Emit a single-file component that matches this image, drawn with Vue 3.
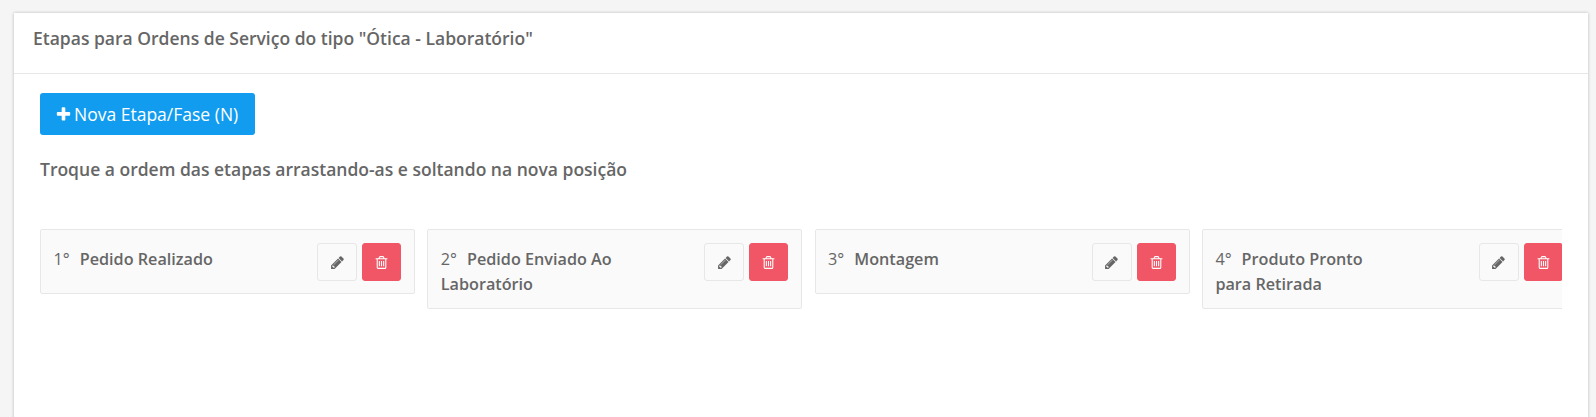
<script setup>
const etapas = [
  { n: '1°', name: 'Pedido Realizado' },
  { n: '2°', name: 'Pedido Enviado Ao Laboratório' },
  { n: '3°', name: 'Montagem' },
  { n: '4°', name: 'Produto Pronto para Retirada' }
]
</script>

<template>
  <div class="page">
    <section class="card">
      <header class="card-head">Etapas para Ordens de Serviço do tipo "Ótica - Laboratório"</header>
      <div class="card-body">
        <button class="btn-new">
          <svg class="plus" viewBox="0 0 1792 1792"><path fill="currentColor" d="M1600 736v192q0 40-28 68t-68 28h-416v416q0 40-28 68t-68 28h-192q-40 0-68-28t-28-68v-416h-416q-40 0-68-28t-28-68v-192q0-40 28-68t68-28h416v-416q0-40 28-68t68-28h192q40 0 68 28t28 68v416h416q40 0 68 28t28 68z"/></svg>
          <span>Nova Etapa/Fase (N)</span>
        </button>
        <h2 class="hint">Troque a ordem das etapas arrastando-as e soltando na nova posição</h2>
        <div class="list">
          <article v-for="e in etapas" :key="e.n" class="item">
            <div class="label"><span class="num">{{ e.n }}</span><span class="name">{{ e.name }}</span></div>
            <div class="actions">
              <button class="btn-edit" aria-label="Editar">
                <svg viewBox="0 0 1792 1792"><path fill="currentColor" d="M491 1536l91-91-235-235-91 91v107h128v128h107zm523-928q0-22-22-22-10 0-17 7l-542 542q-7 7-7 17 0 22 22 22 10 0 17-7l542-542q7-7 7-17zm-54-192l416 416-832 832h-416v-416zm683 96q0 53-37 90l-166 166-416-416 166-165q36-38 90-38 53 0 91 38l235 234q37 39 37 91z"/></svg>
              </button>
              <button class="btn-del" aria-label="Excluir">
                <svg viewBox="0 0 1792 1792"><path fill="currentColor" d="M704 736v576q0 14-9 23t-23 9h-64q-14 0-23-9t-9-23v-576q0-14 9-23t23-9h64q14 0 23 9t9 23zm256 0v576q0 14-9 23t-23 9h-64q-14 0-23-9t-9-23v-576q0-14 9-23t23-9h64q14 0 23 9t9 23zm256 0v576q0 14-9 23t-23 9h-64q-14 0-23-9t-9-23v-576q0-14 9-23t23-9h64q14 0 23 9t9 23zm128 724v-948h-896v948q0 22 7 40.500t14.500 27 10.500 8.500h832q3 0 10.500-8.500t14.500-27 7-40.500zm-672-1076h448l-48-117q-7-9-17-11h-317q-10 2-17 11zm928 32v64q0 14-9 23t-23 9h-96v948q0 83-47 143.500t-113 60.500h-832q-66 0-113-58.500t-47-141.500v-952h-96q-14 0-23-9t-9-23v-64q0-14 9-23t23-9h309l70-167q15-37 54-63t79-26h320q40 0 79 26t54 63l70 167h309q14 0 23 9t9 23z"/></svg>
              </button>
            </div>
          </article>
        </div>
      </div>
    </section>
  </div>
</template>

<style>
html, body { margin: 0; background: #f5f5f5; overflow: hidden; }
</style>

<style scoped>
.page {
  height: 417px;
  box-sizing: border-box;
  padding: 13px 8px 0 14px;
  overflow: hidden;
  font-family: "Open Sans", sans-serif;
  color: #666;
}
.card {
  background: #fff;
  height: 420px;
  box-shadow: 0 0 3px rgba(0, 0, 0, .25);
}
.card-head {
  height: 61px;
  box-sizing: border-box;
  padding: 0 19px 10px;
  display: flex;
  align-items: center;
  border-bottom: 1px solid #e7e7e7;
  font-size: 17.5px;
  font-weight: 600;
}
.card-body { padding: 19px 26px 0 26px; }
.btn-new {
  display: flex;
  align-items: center;
  gap: 2px;
  width: 215px;
  height: 42px;
  padding: 0 0 1px 15px;
  border: 0;
  border-radius: 3px;
  background: #119cf0;
  color: #fff;
  font: 400 17.5px "Open Sans", sans-serif;
}
.plus { width: 17px; height: 17px; margin-top: 1px; }
.hint {
  margin: 22px 0 48px;
  font-size: 17.5px;
  line-height: 24px;
  font-weight: 600;
}
.list { display: flex; align-items: flex-start; gap: 12.3px; overflow: hidden; }
.item {
  flex: 0 0 375px;
  box-sizing: border-box;
  display: flex;
  justify-content: space-between;
  align-items: flex-start;
  padding: 13px 13px 10px 12.5px;
  background: #fafafa;
  border: 1px solid #e7e7e7;
  border-radius: 2px;
  font-size: 16.2px;
  line-height: 25.4px;
}
.label { width: 178px; padding-top: 4px; }
.num { margin-right: 10px; }
.name { font-weight: 600; }
.actions { display: flex; gap: 5px; margin-bottom: 2px; }
.actions button {
  display: flex;
  align-items: center;
  justify-content: center;
  height: 38px;
  border-radius: 3px;
  padding: 0;
}
.actions svg { width: 15px; height: 15px; }
.btn-edit { width: 40px; background: #fafafa; border: 1px solid #e7e7e7; color: #666; }
.btn-del { width: 39px; background: #f15667; border: 1px solid #f15667; color: #fff; }
</style>
